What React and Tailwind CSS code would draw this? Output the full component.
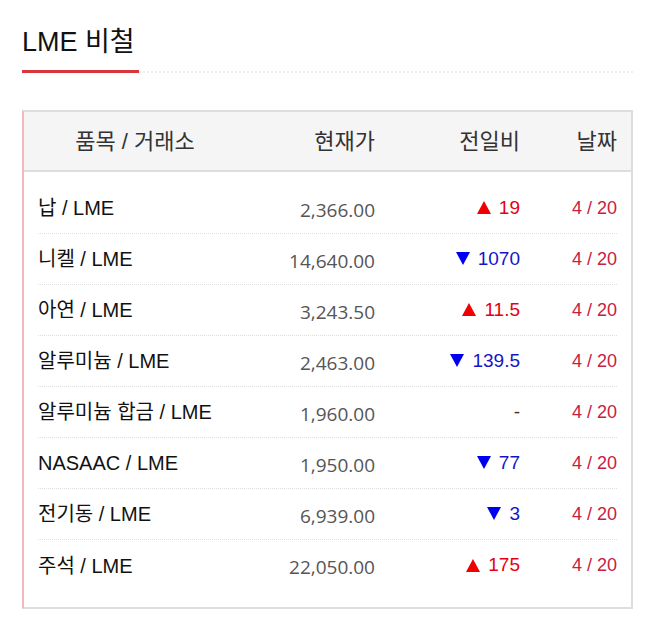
import React from 'react';

const rows = [
  { name: '납', price: '2,366.00', dir: 'up', diff: '19' },
  { name: '니켈', price: '14,640.00', dir: 'down', diff: '1070' },
  { name: '아연', price: '3,243.50', dir: 'up', diff: '11.5' },
  { name: '알루미늄', price: '2,463.00', dir: 'down', diff: '139.5' },
  { name: '알루미늄 합금', price: '1,960.00', dir: 'none', diff: '-' },
  { name: 'NASAAC', price: '1,950.00', dir: 'down', diff: '77' },
  { name: '전기동', price: '6,939.00', dir: 'down', diff: '3' },
  { name: '주석', price: '22,050.00', dir: 'up', diff: '175' },
];

const sans = "font-['Liberation_Sans','Noto_Sans_CJK_KR',sans-serif]";

const Tri = ({ up, color }) => (
  <svg width="14" height="13" viewBox="0 0 14 13" className="inline-block mr-[8px] mb-[2px]">
    <path d={up ? 'M7 0 L14 13 L0 13 Z' : 'M0 0 L14 0 L7 13 Z'} fill={color} />
  </svg>
);

const Change = ({ dir, diff }) => {
  if (dir === 'up')
    return (
      <span className="text-[#e60012]">
        <Tri up color="#f00000" />
        {diff}
      </span>
    );
  if (dir === 'down')
    return (
      <span className="text-[#1515c8]">
        <Tri color="#0000f0" />
        {diff}
      </span>
    );
  return <span className="text-[#333]">{diff}</span>;
};

export default function App() {
  return (
    <div className={`bg-white w-[653px] h-[618px] pl-[22px] pr-[20px] ${sans}`}>
      {/* title */}
      <div className="pt-[26px]">
        <h2 className="text-[27px] leading-[32px] text-[#111] font-normal">LME 비철</h2>
        <div className="flex items-center mt-[12px]">
          <div className="w-[117px] h-[3px] bg-[#d9363e]" />
          <div className="flex-1 border-t-2 border-dotted border-[#eeeeee]" />
        </div>
      </div>

      {/* table */}
      <div className="mt-[37px] border-2 border-[#dddddd] border-l-[#f3b9b9] w-[611px]">
        <div className="grid grid-cols-[194px_143px_145px_97px] px-[14px] h-[60px] items-center bg-[#f5f5f5] border-b-2 border-[#dddddd] text-[22px] text-[#333]">
          <div className="text-center">품목 / 거래소</div>
          <div className="text-right">현재가</div>
          <div className="text-right">전일비</div>
          <div className="text-right">날짜</div>
        </div>
        <div className="px-[14px] pt-[11px] pb-[16px]">
          {rows.map((r, i) => (
            <div
              key={i}
              className={`grid grid-cols-[194px_143px_145px_97px] h-[51px] items-center ${i < rows.length - 1 ? 'border-b border-dotted border-[#dedede]' : ''}`}
            >
              <div className="text-[20px] text-[#111] whitespace-nowrap">{r.name} / LME</div>
              <div className="text-right text-[19px] text-[#555] font-['Open_Sans',sans-serif] pt-[4px]">{r.price}</div>
              <div className="text-right text-[19px]"><Change dir={r.dir} diff={r.diff} /></div>
              <div className="text-right text-[18px] text-[#c8203f]">4 / 20</div>
            </div>
          ))}
        </div>
      </div>
    </div>
  );
}
